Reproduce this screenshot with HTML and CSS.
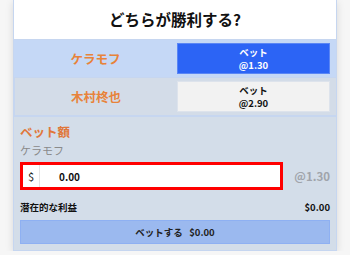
FILE: index.html
```html
<!DOCTYPE html>
<html lang="ja">
<head>
  <meta charset="UTF-8">
  <title>どちらが勝利する?</title>
  <link rel="stylesheet" href="styles.css">
</head>
<body>
  <div class="card">
    <h1 class="title">どちらが勝利する?</h1>

    <div class="row selected">
      <div class="name">ケラモフ</div>
      <button class="bet active"><span>ベット</span><span>@1.30</span></button>
    </div>
    <div class="row">
      <div class="name">木村柊也</div>
      <button class="bet"><span>ベット</span><span>@2.90</span></button>
    </div>

    <div class="slip">
      <div class="slip-label">ベット額</div>
      <div class="slip-pick">ケラモフ</div>
      <div class="stake-row">
        <div class="stake">
          <span class="currency">$</span>
          <span class="amount">0.00</span>
        </div>
        <span class="odds">@1.30</span>
      </div>
      <div class="profit">
        <span>潜在的な利益</span>
        <span>$0.00</span>
      </div>
      <button class="place">ベットする&nbsp;&nbsp;&nbsp;$0.00</button>
    </div>
  </div>
</body>
</html>
```

FILE: styles.css
```css
body {
  font-family: "Noto Sans CJK JP", "Noto Sans", sans-serif;
  background-color: #f6f6f6;
  margin: 0;
}
.card {
  width: 322px;
  margin: 0 13px;
  background: #fff;
  border: 1px solid #c6d6f0;
  border-top: none;
  box-shadow: 0 2px 8px rgba(0, 0, 0, 0.12);
}
.title {
  margin: 0;
  height: 39px;
  line-height: 38px;
  text-align: center;
  font-size: 15.5px;
  font-weight: bold;
  color: #111;
}
.row {
  display: flex;
  align-items: center;
  height: 37px;
  padding: 0 6px 0 0;
  background-color: #d3dce8;
  border-top: 1px solid #c6d6f0;
  border-left: 1px solid #c6d6f0;
}
.row.selected {
  background-color: #c5d8f6;
  border-left: none;
}
.name {
  flex: 1;
  text-align: center;
  font-size: 12.5px;
  font-weight: bold;
  color: #e8833a;
}
.bet {
  display: flex;
  flex-direction: column;
  justify-content: center;
  align-items: center;
  width: 153px;
  height: 31px;
  padding: 0;
  border: 1px solid #dde3ec;
  background-color: #f2f2f2;
  color: #111;
  font-family: inherit;
  font-size: 9.5px;
  font-weight: bold;
  line-height: 13px;
}
.bet.active {
  background-color: #2c64f5;
  border-color: #5a86f5;
  color: #fff;
}
.slip {
  background-color: #d3dde9;
  border-top: 2px solid #c6d6f0;
  padding: 5px 6px 6px 6px;
}
.slip-label {
  font-size: 12.5px;
  font-weight: bold;
  color: #e0773a;
  line-height: 20px;
}
.slip-pick {
  font-size: 11px;
  color: #8a8a8a;
  line-height: 16px;
}
.stake-row {
  display: flex;
  align-items: center;
  margin-top: 4px;
}
.stake {
  display: flex;
  align-items: center;
  width: 257px;
  height: 22px;
  border: 3px solid #ff0000;
  background: #fff;
}
.currency {
  width: 16px;
  height: 22px;
  line-height: 22px;
  text-align: center;
  font-size: 11px;
  color: #222;
  border-right: 1px solid #e4e4e4;
}
.amount {
  margin-left: 19px;
  font-size: 10px;
  font-weight: bold;
  color: #111;
}
.odds {
  flex: 1;
  text-align: right;
  font-size: 11.5px;
  font-weight: bold;
  color: #a0a4ab;
}
.profit {
  display: flex;
  justify-content: space-between;
  margin-top: 9px;
  font-size: 9.5px;
  font-weight: bold;
  color: #111;
  line-height: 16px;
}
.place {
  display: block;
  width: 100%;
  height: 24px;
  margin-top: 5px;
  padding: 0;
  border: 1px solid #8eb0f2;
  background-color: #9bb9ef;
  font-family: inherit;
  font-size: 9.5px;
  font-weight: bold;
  color: #222;
}
```
